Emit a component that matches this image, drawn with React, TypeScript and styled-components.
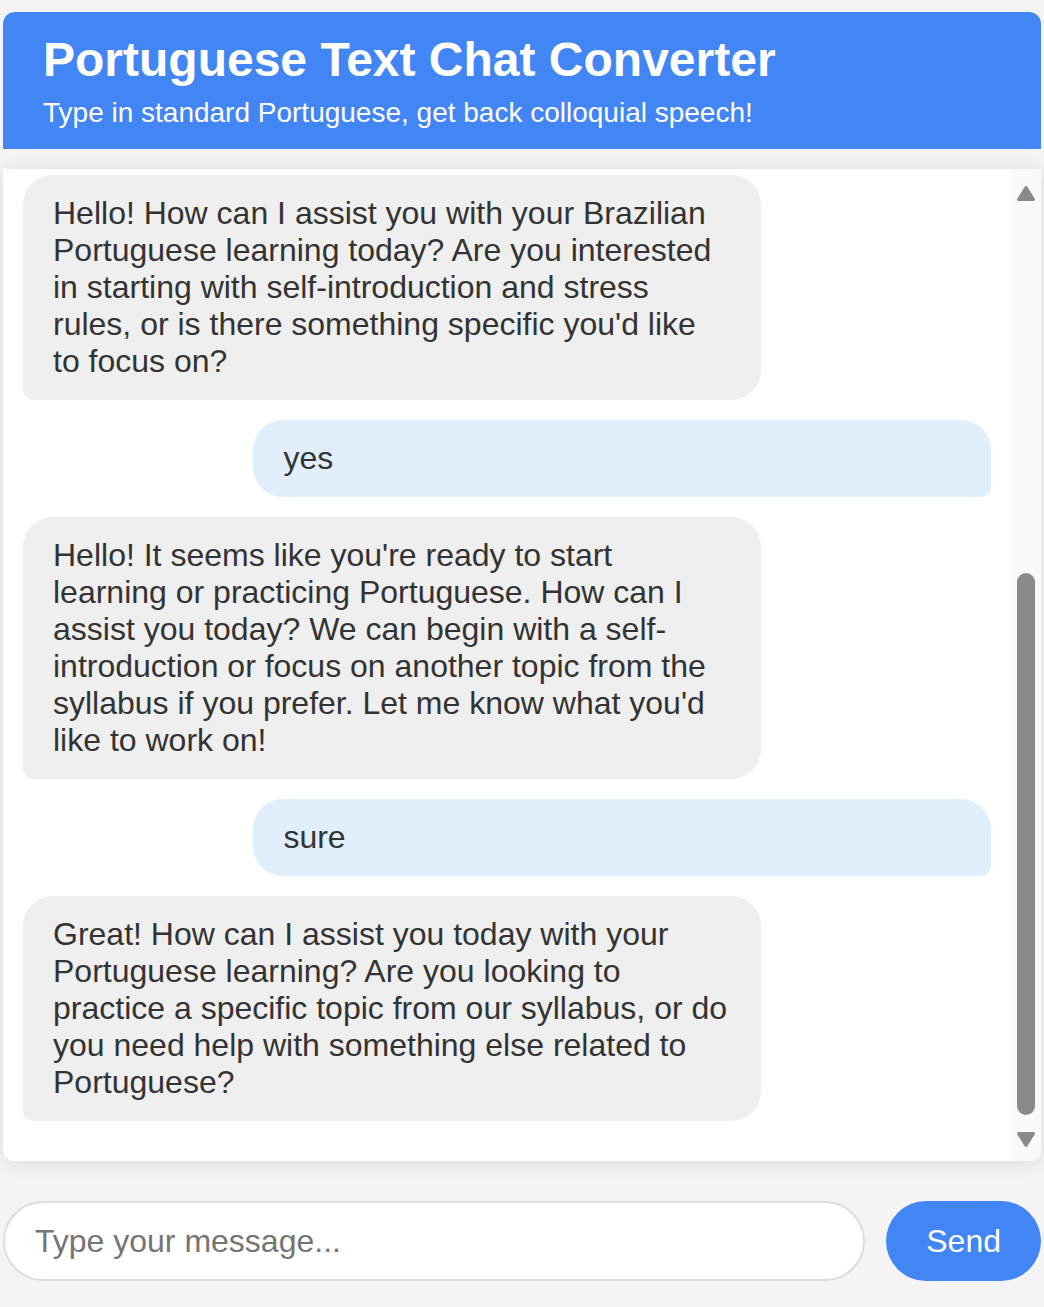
import React from "react";
import styled, { createGlobalStyle } from "styled-components";

const GlobalStyle = createGlobalStyle`
  html, body {
    margin: 0;
    padding: 0;
    background: #f4f4f4;
    font-family: "Liberation Sans", Arial, sans-serif;
    color: #333;
  }
  * { box-sizing: border-box; }
`;

const Page = styled.div`
  width: 1038px;
  margin: 12px auto 0;
  display: flex;
  flex-direction: column;
`;

const Header = styled.header`
  background: #4285f4;
  color: #fff;
  padding: 20px 40px;
  border-radius: 12px 12px 0 0;
`;

const Title = styled.h1`
  margin: 0 0 10px;
  font-size: 48px;
  font-weight: bold;
  line-height: normal;
`;

const Subtitle = styled.p`
  margin: 0;
  font-size: 28px;
  line-height: normal;
`;

const ChatBox = styled.div`
  margin-top: 20px;
  height: 992px;
  background: #fff;
  border-radius: 0 0 10px 10px;
  box-shadow: 0 2px 20px rgba(0, 0, 0, 0.1);
  display: flex;
  overflow: hidden;
`;

const MessageList = styled.div`
  flex: 1;
  min-width: 0;
  padding: 8px 20px 20px;
  display: flex;
  flex-direction: column;
  justify-content: flex-end;
  overflow: hidden;
`;

const Bubble = styled.div<{ $user?: boolean }>`
  box-sizing: content-box;
  width: 70%;
  flex-shrink: 0;
  padding: 20px 30px;
  margin-bottom: 20px;
  font-size: 32px;
  line-height: normal;
  color: #333;
  align-self: ${(p) => (p.$user ? "flex-end" : "flex-start")};
  background: ${(p) => (p.$user ? "#e1effd" : "#efefef")};
  border-radius: ${(p) => (p.$user ? "30px 30px 10px 30px" : "30px 30px 30px 10px")};
`;

const ScrollTrack = styled.div`
  width: 30px;
  flex-shrink: 0;
  background: #fafafa;
  display: flex;
  flex-direction: column;
`;

const ScrollButton = styled.div`
  height: 40px;
  flex-shrink: 0;
  display: flex;
  justify-content: center;
`;

const ThumbArea = styled.div`
  flex: 1;
  display: flex;
  flex-direction: column;
  justify-content: flex-end;
  padding: 6px;
`;

const Thumb = styled.div<{ $size: number }>`
  height: ${(p) => p.$size}px;
  background: #8a8a8a;
  border-radius: 9px;
`;

const InputRow = styled.form`
  margin-top: 40px;
  display: flex;
  gap: 21px;
`;

const Input = styled.input`
  flex: 1;
  min-width: 0;
  font-family: inherit;
  font-size: 32px;
  line-height: normal;
  color: #333;
  padding: 20px 30px;
  height: 80px;
  border: 2px solid #ddd;
  border-radius: 40px;
  background: #fff;
  outline: none;
  caret-color: #000;
  &::placeholder {
    color: #757575;
  }
`;

const SendButton = styled.button`
  font-family: inherit;
  font-size: 32px;
  color: #fff;
  background: #4285f4;
  border: none;
  border-radius: 40px;
  padding: 20px 40px;
  cursor: pointer;
`;

const Arrow = ({ down }: { down?: boolean }) => (
  <svg width="30" height="40" viewBox="0 0 30 40" aria-hidden="true">
    {down ? (
      <path d="M7.5 12.5 H22.5 L15 24.5 Z" fill="#8a8a8a" stroke="#8a8a8a" strokeWidth="3" strokeLinejoin="round" />
    ) : (
      <path d="M15 18.5 L22.5 30.5 H7.5 Z" fill="#8a8a8a" stroke="#8a8a8a" strokeWidth="3" strokeLinejoin="round" />
    )}
  </svg>
);

type Msg = { user?: boolean; text: string };

const messages: Msg[] = [
  {
    text:
      "Hello! How can I assist you with your Brazilian Portuguese learning today? Are you interested in starting with self-introduction and stress rules, or is there something specific you'd like to focus on?",
  },
  { user: true, text: "yes" },
  {
    text:
      "Hello! It seems like you're ready to start learning or practicing Portuguese. How can I assist you today? We can begin with a self-introduction or focus on another topic from the syllabus if you prefer. Let me know what you'd like to work on!",
  },
  { user: true, text: "sure" },
  {
    text:
      "Great! How can I assist you today with your Portuguese learning? Are you looking to practice a specific topic from our syllabus, or do you need help with something else related to Portuguese?",
  },
];

export default function App() {
  return (
    <>
      <GlobalStyle />
      <Page>
        <Header>
          <Title>Portuguese Text Chat Converter</Title>
          <Subtitle>Type in standard Portuguese, get back colloquial speech!</Subtitle>
        </Header>
        <ChatBox>
          <MessageList>
            {messages.map((m, i) => (
              <Bubble key={i} $user={m.user}>
                {m.text}
              </Bubble>
            ))}
          </MessageList>
          <ScrollTrack>
            <ScrollButton>
              <Arrow />
            </ScrollButton>
            <ThumbArea>
              <Thumb $size={542} />
            </ThumbArea>
            <ScrollButton>
              <Arrow down />
            </ScrollButton>
          </ScrollTrack>
        </ChatBox>
        <InputRow onSubmit={(e) => e.preventDefault()}>
          <Input type="text" placeholder="Type your message..." autoFocus />
          <SendButton type="submit">Send</SendButton>
        </InputRow>
      </Page>
    </>
  );
}
